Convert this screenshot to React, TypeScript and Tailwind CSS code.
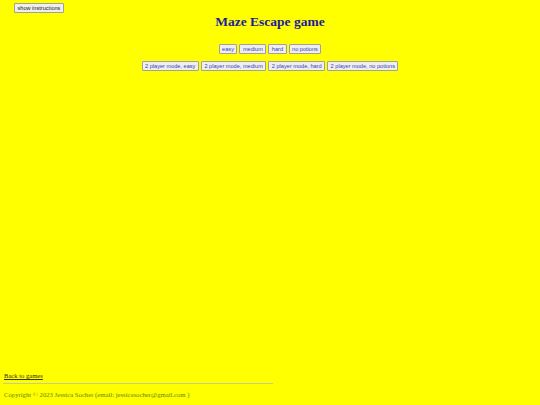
import React from "react";

const btn =
  "h-[10px] px-[2.5px] border border-[#a0a0a0] rounded-[1px] bg-[#efefef] text-[5.6px] leading-[7px] text-[#3b3bb0] font-['Liberation_Sans',Arial,sans-serif] whitespace-nowrap flex items-center";

export default function App() {
  return (
    <div className="w-[540px] h-[405px] bg-[#ffff00] flex flex-col overflow-hidden">
      <div className="pl-[14px] pt-[3px] flex">
        <button className={btn + " text-[#222222]"}>show instructions</button>
      </div>
      <h1 className="mt-[0px] text-center text-[13.5px] leading-[17px] font-bold text-[#1c1c9c] font-['Liberation_Serif','Times_New_Roman',serif]">
        Maze Escape game
      </h1>
      <div className="mt-[14px] flex justify-center gap-[2px]">
        <button className={btn}>easy</button>
        <button className={btn}>medium</button>
        <button className={btn}>hard</button>
        <button className={btn}>no potions</button>
      </div>
      <div className="mt-[7px] flex justify-center gap-[2px]">
        <button className={btn}>2 player mode, easy</button>
        <button className={btn}>2 player mode, medium</button>
        <button className={btn}>2 player mode, hard</button>
        <button className={btn}>2 player mode, no potions</button>
      </div>
      <div className="mt-auto pl-[4px] pb-[6px] font-['Liberation_Serif','Times_New_Roman',serif]">
        <a href="#" className="text-[6.6px] leading-[8px] text-[#333300] underline block">
          Back to games
        </a>
        <div className="mt-[3px] w-[270px] h-px bg-[#c8c8a0] -ml-[1px]" />
        <p className="mt-[7px] text-[6.7px] leading-[8px] text-[#5f8a00]">
          Copyright © 2023 Jessica Socher (email: jessicasocher@gmail.com )
        </p>
      </div>
    </div>
  );
}
